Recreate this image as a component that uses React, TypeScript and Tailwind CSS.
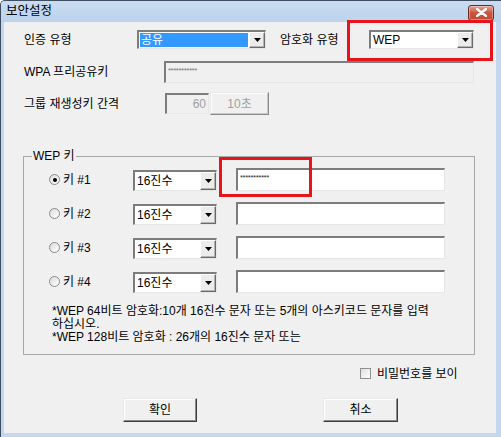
import React from 'react';

const font = "font-['Liberation_Sans','Noto_Sans_CJK_KR',sans-serif]";

function Arrow() {
  return (
    <svg width="7" height="4" viewBox="0 0 7 4">
      <path d="M0 0h7L3.5 4z" fill="#000" />
    </svg>
  );
}

function Combo({
  value,
  width,
  selected = false,
}: {
  value: string;
  width: number;
  selected?: boolean;
}) {
  return (
    <div
      className="flex h-full items-stretch border-t-2 border-l-2 border-b border-r border-t-[#7c7c7c] border-l-[#7c7c7c] border-b-[#e6e6e6] border-r-[#e6e6e6] bg-white"
      style={{ width }}
    >
      <div className="flex flex-1 items-stretch p-[1px]">
        <div
          className={
            'flex flex-1 items-center pl-[1px] text-[12px] leading-none ' +
            (selected ? 'bg-[#3399ff] text-white' : 'text-black')
          }
        >
          {value}
        </div>
      </div>
      <div className="flex w-[16px] items-center justify-center border-t border-l border-b border-r border-t-white border-l-white border-b-[#6a6a6a] border-r-[#6a6a6a] bg-[#ececec] shadow-[inset_-1px_-1px_0_#b4b4b4]">
        <Arrow />
      </div>
    </div>
  );
}

function TextBox({
  width,
  disabled = false,
  children,
}: {
  width: number;
  disabled?: boolean;
  children?: React.ReactNode;
}) {
  return (
    <div
      className={
        'flex h-full items-center border-t-2 border-l-2 border-b border-r border-t-[#7c7c7c] border-l-[#7c7c7c] border-b-[#e6e6e6] border-r-[#e6e6e6] px-[2px] ' +
        (disabled ? 'bg-[#f0f0f0]' : 'bg-white')
      }
      style={{ width }}
    >
      {children}
    </div>
  );
}

function Radio({ checked = false }: { checked?: boolean }) {
  return (
    <div className="flex h-[11px] w-[11px] items-center justify-center rounded-full border border-[#8a8a8a] bg-gradient-to-br from-[#dcdcdc] to-white">
      {checked && <div className="h-[4px] w-[4px] rounded-full bg-black" />}
    </div>
  );
}

function Button({
  label,
  width,
  height,
  disabled = false,
}: {
  label: string;
  width: number;
  height: number;
  disabled?: boolean;
}) {
  return (
    <div
      className={
        'flex items-center justify-center border border-t-[#e8e8e8] border-l-[#e8e8e8] bg-[#f0f0f0] text-[12px] leading-none ' +
        (disabled
          ? 'border-r-[#8a8a8a] border-b-[#8a8a8a] text-[#a0a0a0] shadow-[inset_-1px_-1px_0_#c8c8c8,inset_1px_1px_0_#ffffff]'
          : 'border-r-[#3c3c3c] border-b-[#3c3c3c] text-black shadow-[inset_-1px_-1px_0_#8a8a8a,inset_1px_1px_0_#ffffff]')
      }
      style={{ width, height }}
    >
      {label}
    </div>
  );
}

const keys = ['키 #1', '키 #2', '키 #3', '키 #4'];

export default function App() {
  return (
    <div className={`${font} relative flex h-[437px] w-[501px] flex-col overflow-hidden rounded-tl-[5px] border-l border-t border-[#3d4d5e] bg-[#c3d8ee] text-black`}>
      {/* title bar */}
      <div className="flex h-[21px] shrink-0 items-center justify-between bg-gradient-to-b from-[#c9dcf1] to-[#bcd3ec] pl-[5px] pr-[7px]">
        <span className="text-[12.5px] leading-none">보안설정</span>
        <div className="mt-[2px] flex h-[16px] w-[26px] items-center justify-center rounded-[3px] border border-[#6b2b22] bg-gradient-to-b from-[#e8a091] via-[#c8553f] to-[#c24a33] shadow-[inset_0_0_0_1px_rgba(255,255,255,0.35)]">
          <svg width="11" height="9" viewBox="0 0 11 9">
            <path d="M1 1l9 7M10 1L1 8" stroke="#fff" strokeWidth="2.4" strokeLinecap="round" />
          </svg>
        </div>
      </div>

      {/* client */}
      <div className="mb-[4px] ml-[3px] mr-[5px] flex flex-1 flex-col bg-[#f0f0f0] text-[12px]">
        {/* 인증 유형 / 암호화 유형 */}
        <div className="ml-[20px] mt-[8px] flex h-[19px] items-center">
          <span className="w-[113px]">인증 유형</span>
          <Combo value="공유" width={129} selected />
          <span className="ml-[14px] w-[89px]">암호화 유형</span>
          <Combo value="WEP" width={105} />
        </div>

        {/* WPA */}
        <div className="ml-[20px] mt-[12px] flex h-[22px] items-center">
          <span className="w-[140px]">WPA 프리공유키</span>
          <TextBox width={310} disabled>
            <span className="mt-[-4px] text-[8px] leading-none tracking-[-0.5px] text-[#7a7a7a]">***********</span>
          </TextBox>
        </div>

        {/* 그룹 재생성키 간격 */}
        <div className="ml-[20px] mt-[9px] flex h-[23px] items-center">
          <span className="w-[141px]">그룹 재생성키 간격</span>
          <div className="flex h-[21px] items-center">
            <TextBox width={44} disabled>
              <span className="w-full text-right text-[#a0a0a0]">60</span>
            </TextBox>
          </div>
          <div className="ml-[1px]">
            <Button label="10초" width={59} height={23} disabled />
          </div>
        </div>

        {/* WEP 키 group */}
        <div className="relative ml-[19px] mt-[41px] h-[199px] w-[452px] border border-[#a8a8a8]">
          <span className="absolute -top-[8px] left-[8px] bg-[#f0f0f0] px-[1px] leading-[14px]">WEP 키</span>

          <div className="ml-[25px] mt-[11px] flex flex-col gap-[11px]">
            {keys.map((k, i) => (
              <div key={k} className="flex h-[23px] items-center">
                <Radio checked={i === 0} />
                <span className="ml-[3px] w-[70px]">{k}</span>
                <div className="mt-[2px] h-[21px]">
                  <Combo value="16진수" width={84} />
                </div>
                <div className="ml-[19px] h-[23px]">
                  <TextBox width={209}>
                    {i === 0 && (
                      <span className="mt-[-5px] text-[8px] leading-none tracking-[-0.5px] text-[#333]">***********</span>
                    )}
                  </TextBox>
                </div>
              </div>
            ))}
          </div>

          <div className="ml-[28px] mt-[12px] text-[12px] leading-[13px]">
            <div>*WEP 64비트 암호화:10개 16진수 문자 또는 5개의 아스키코드 문자를 입력</div>
            <div>하십시오.</div>
            <div>*WEP 128비트 암호화 : 26개의 16진수 문자 또는</div>
          </div>
        </div>

        {/* 비밀번호 보이기 */}
        <div className="ml-[356px] mt-[13px] flex h-[11px] items-center">
          <div className="h-[11px] w-[11px] border border-[#8f8f8f] bg-gradient-to-br from-[#dedede] to-white" />
          <span className="ml-[6px] whitespace-nowrap leading-none">비밀번호를 보이</span>
        </div>

        {/* buttons */}
        <div className="ml-[119px] mt-[19px] flex gap-[126px]">
          <Button label="확인" width={74} height={24} />
          <Button label="취소" width={75} height={24} />
        </div>
      </div>

      {/* annotation boxes */}
      <div className="pointer-events-none absolute left-[346px] top-[19px] h-[41px] w-[146px] border-[3px] border-[#e8141c]" />
      <div className="pointer-events-none absolute left-[218px] top-[156px] h-[40px] w-[93px] border-[3px] border-[#e8141c]" />
    </div>
  );
}
